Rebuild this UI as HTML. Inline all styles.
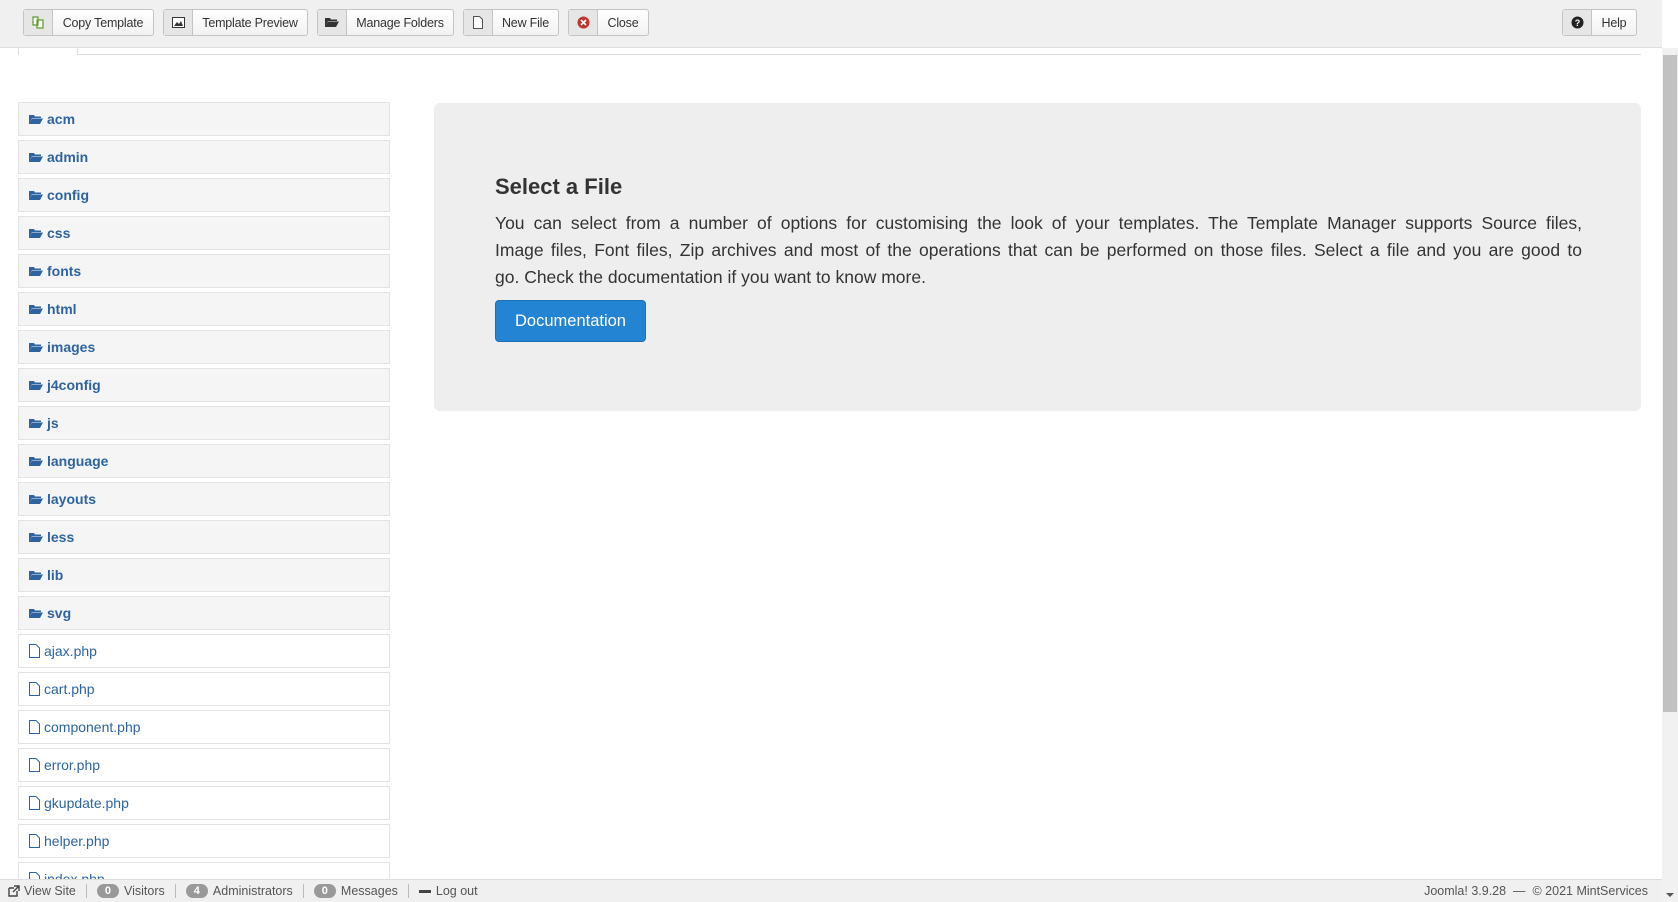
<!DOCTYPE html>
<html><head><meta charset="utf-8">
<style>
*{box-sizing:border-box;margin:0;padding:0}
body{width:1678px;height:902px;overflow:hidden;background:#fff;font-family:"Liberation Sans",Arial,sans-serif;position:relative}
.tb{position:absolute;left:0;top:0;width:1662px;height:48px;background:#f0f0f0;border-bottom:1px solid #ddd}
.btn{position:absolute;top:9px;height:27px;border:1px solid #c4c4c4;border-radius:3px;background:linear-gradient(#fff,#f2f2f2);font-size:12.5px;color:#333;display:flex;align-items:center;white-space:nowrap}
.btn .ic{width:29px;flex:none;height:100%;background:#e6e6e6;border-right:1px solid #c4c4c4;display:flex;align-items:center;justify-content:center}
.btn .t{padding:0 4px;flex:1;text-align:center;letter-spacing:-0.2px}
.tabline{position:absolute;left:78px;top:54px;width:1563px;border-top:1px solid #ddd}
.tab{position:absolute;left:18px;top:48px;width:60px;height:7px;border-left:1px solid #ddd;border-right:1px solid #ddd}
.row{position:absolute;left:18px;width:372px;height:34px;border:1px solid #e3e3e3;font-size:14px;color:#2d64a0;display:flex;align-items:center;padding-left:10px}
.row.f{background:#f5f5f5;font-weight:bold}
.row svg{margin-right:4px}
.panel{position:absolute;left:434px;top:103px;width:1207px;height:308px;background:#eee;border-radius:6px}
h2{position:absolute;left:495px;top:174px;font-size:22px;color:#333;font-weight:bold}
.d{position:absolute;left:495px;top:210px;width:1087px;font-size:17.5px;line-height:27px;color:#333}
.d div{text-align:justify;text-align-last:justify;white-space:nowrap}
.d div:last-child{text-align-last:left}
.doc{position:absolute;left:495px;top:300px;width:151px;height:42px;background:#2384d3;border:1px solid #1d6fb3;border-radius:4px;color:#fff;font-size:16.5px;display:flex;align-items:center;justify-content:center}
.ft{position:absolute;left:0;top:879px;width:1662px;height:23px;background:#f0f0f0;border-top:1px solid #ddd;font-size:12.5px;color:#555;display:flex;align-items:center}
.ft .it{display:flex;align-items:center;padding:0 10px;border-right:1px solid #bbb;height:14px}
.badge{display:inline-block;background:#999;color:#fff;font-size:11px;font-weight:bold;border-radius:9px;padding:1px 8px;margin-right:5px}
.sb{position:absolute;left:1662px;top:48px;width:16px;height:854px;background:#f1f1f1}
.th{position:absolute;left:1663px;top:55px;width:14px;height:657px;background:#c1c1c1}
</style></head><body>
<div class="tb">
 <div class="btn" style="left:23px;width:131px"><div class="ic"><svg width="12" height="13" viewBox="0 0 12 13"><path d="M1 1h5v8H1z M5 4h6v8H5z" fill="#fff" stroke="#5a9a2a" stroke-width="1.2"/></svg></div><div class="t">Copy Template</div></div>
 <div class="btn" style="left:163px;width:145px"><div class="ic"><svg width="13" height="11"><rect x="0.5" y="0.5" width="12" height="10" fill="#fff" stroke="#333"/><path d="M2 9l3-4 2 2 2-3 2 5z" fill="#333"/></svg></div><div class="t">Template Preview</div></div>
 <div class="btn" style="left:317px;width:137px"><div class="ic"><svg width="14" height="11"><path d="M0 1h5l1 1.5h6V4H3L0 10z M3 4.5h11L11 10H0z" fill="#333"/></svg></div><div class="t">Manage Folders</div></div>
 <div class="btn" style="left:463px;width:96px"><div class="ic"><svg width="10" height="13"><path d="M0.5 0.5h6l3 3v9h-9z" fill="#fff" stroke="#555"/></svg></div><div class="t">New File</div></div>
 <div class="btn" style="left:568px;width:81px"><div class="ic"><svg width="13" height="13"><circle cx="6.5" cy="6.5" r="6" fill="#bd362f"/><path d="M4 4l5 5M9 4l-5 5" stroke="#fff" stroke-width="1.6"/></svg></div><div class="t">Close</div></div>
 <div class="btn" style="left:1562px;width:75px"><div class="ic"><svg width="13" height="13"><circle cx="6.5" cy="6.5" r="6" fill="#222"/><text x="6.5" y="10" font-size="9" font-weight="bold" fill="#fff" text-anchor="middle" font-family="Liberation Sans">?</text></svg></div><div class="t">Help</div></div>
</div>
<div class="tab"></div><div class="tabline"></div>

<div class="row f" style="top:102px"><svg width="14" height="11"><path d="M0 1h5l1 1.5h6V4H3L0 10z M3 4.5h11L11 10H0z" fill="#2d64a0"/></svg>acm</div>
<div class="row f" style="top:140px"><svg width="14" height="11"><path d="M0 1h5l1 1.5h6V4H3L0 10z M3 4.5h11L11 10H0z" fill="#2d64a0"/></svg>admin</div>
<div class="row f" style="top:178px"><svg width="14" height="11"><path d="M0 1h5l1 1.5h6V4H3L0 10z M3 4.5h11L11 10H0z" fill="#2d64a0"/></svg>config</div>
<div class="row f" style="top:216px"><svg width="14" height="11"><path d="M0 1h5l1 1.5h6V4H3L0 10z M3 4.5h11L11 10H0z" fill="#2d64a0"/></svg>css</div>
<div class="row f" style="top:254px"><svg width="14" height="11"><path d="M0 1h5l1 1.5h6V4H3L0 10z M3 4.5h11L11 10H0z" fill="#2d64a0"/></svg>fonts</div>
<div class="row f" style="top:292px"><svg width="14" height="11"><path d="M0 1h5l1 1.5h6V4H3L0 10z M3 4.5h11L11 10H0z" fill="#2d64a0"/></svg>html</div>
<div class="row f" style="top:330px"><svg width="14" height="11"><path d="M0 1h5l1 1.5h6V4H3L0 10z M3 4.5h11L11 10H0z" fill="#2d64a0"/></svg>images</div>
<div class="row f" style="top:368px"><svg width="14" height="11"><path d="M0 1h5l1 1.5h6V4H3L0 10z M3 4.5h11L11 10H0z" fill="#2d64a0"/></svg>j4config</div>
<div class="row f" style="top:406px"><svg width="14" height="11"><path d="M0 1h5l1 1.5h6V4H3L0 10z M3 4.5h11L11 10H0z" fill="#2d64a0"/></svg>js</div>
<div class="row f" style="top:444px"><svg width="14" height="11"><path d="M0 1h5l1 1.5h6V4H3L0 10z M3 4.5h11L11 10H0z" fill="#2d64a0"/></svg>language</div>
<div class="row f" style="top:482px"><svg width="14" height="11"><path d="M0 1h5l1 1.5h6V4H3L0 10z M3 4.5h11L11 10H0z" fill="#2d64a0"/></svg>layouts</div>
<div class="row f" style="top:520px"><svg width="14" height="11"><path d="M0 1h5l1 1.5h6V4H3L0 10z M3 4.5h11L11 10H0z" fill="#2d64a0"/></svg>less</div>
<div class="row f" style="top:558px"><svg width="14" height="11"><path d="M0 1h5l1 1.5h6V4H3L0 10z M3 4.5h11L11 10H0z" fill="#2d64a0"/></svg>lib</div>
<div class="row f" style="top:596px"><svg width="14" height="11"><path d="M0 1h5l1 1.5h6V4H3L0 10z M3 4.5h11L11 10H0z" fill="#2d64a0"/></svg>svg</div>
<div class="row" style="top:634px"><svg width="11" height="14"><path d="M0.5 0.5h6.5l3.5 3.5v9.5h-10z" fill="#fff" stroke="#2d64a0"/></svg>ajax.php</div>
<div class="row" style="top:672px"><svg width="11" height="14"><path d="M0.5 0.5h6.5l3.5 3.5v9.5h-10z" fill="#fff" stroke="#2d64a0"/></svg>cart.php</div>
<div class="row" style="top:710px"><svg width="11" height="14"><path d="M0.5 0.5h6.5l3.5 3.5v9.5h-10z" fill="#fff" stroke="#2d64a0"/></svg>component.php</div>
<div class="row" style="top:748px"><svg width="11" height="14"><path d="M0.5 0.5h6.5l3.5 3.5v9.5h-10z" fill="#fff" stroke="#2d64a0"/></svg>error.php</div>
<div class="row" style="top:786px"><svg width="11" height="14"><path d="M0.5 0.5h6.5l3.5 3.5v9.5h-10z" fill="#fff" stroke="#2d64a0"/></svg>gkupdate.php</div>
<div class="row" style="top:824px"><svg width="11" height="14"><path d="M0.5 0.5h6.5l3.5 3.5v9.5h-10z" fill="#fff" stroke="#2d64a0"/></svg>helper.php</div>
<div class="row" style="top:862px"><svg width="11" height="14"><path d="M0.5 0.5h6.5l3.5 3.5v9.5h-10z" fill="#fff" stroke="#2d64a0"/></svg>index.php</div>

<div class="panel"></div>
<h2>Select a File</h2>
<div class="d">
<div>You can select from a number of options for customising the look of your templates. The Template Manager supports Source files,</div>
<div>Image files, Font files, Zip archives and most of the operations that can be performed on those files. Select a file and you are good to</div>
<div>go. Check the documentation if you want to know more.</div>
</div>
<div class="doc">Documentation</div>

<div class="ft">
 <div class="it" style="padding-left:8px"><svg width="12" height="12" style="margin-right:4px"><path d="M1 3h5M1 3v8h8V6" fill="none" stroke="#444" stroke-width="1.4"/><path d="M6 1h5v5M11 1L5 7" fill="none" stroke="#444" stroke-width="1.4"/></svg>View Site</div>
 <div class="it"><span class="badge">0</span>Visitors</div>
 <div class="it"><span class="badge">4</span>Administrators</div>
 <div class="it"><span class="badge">0</span>Messages</div>
 <div class="it" style="border:none"><span style="display:inline-block;width:12px;height:3px;background:#444;margin-right:5px"></span>Log out</div>
 <div style="margin-left:auto;padding-right:14px;color:#555">Joomla! 3.9.28 &nbsp;— &nbsp;© 2021 MintServices</div>
</div>
<div class="sb"></div><div class="th"></div>
<svg style="position:absolute;left:1666px;top:893px" width="8" height="5"><path d="M0 0h8L4 4z" fill="#555"/></svg>
</body></html>
